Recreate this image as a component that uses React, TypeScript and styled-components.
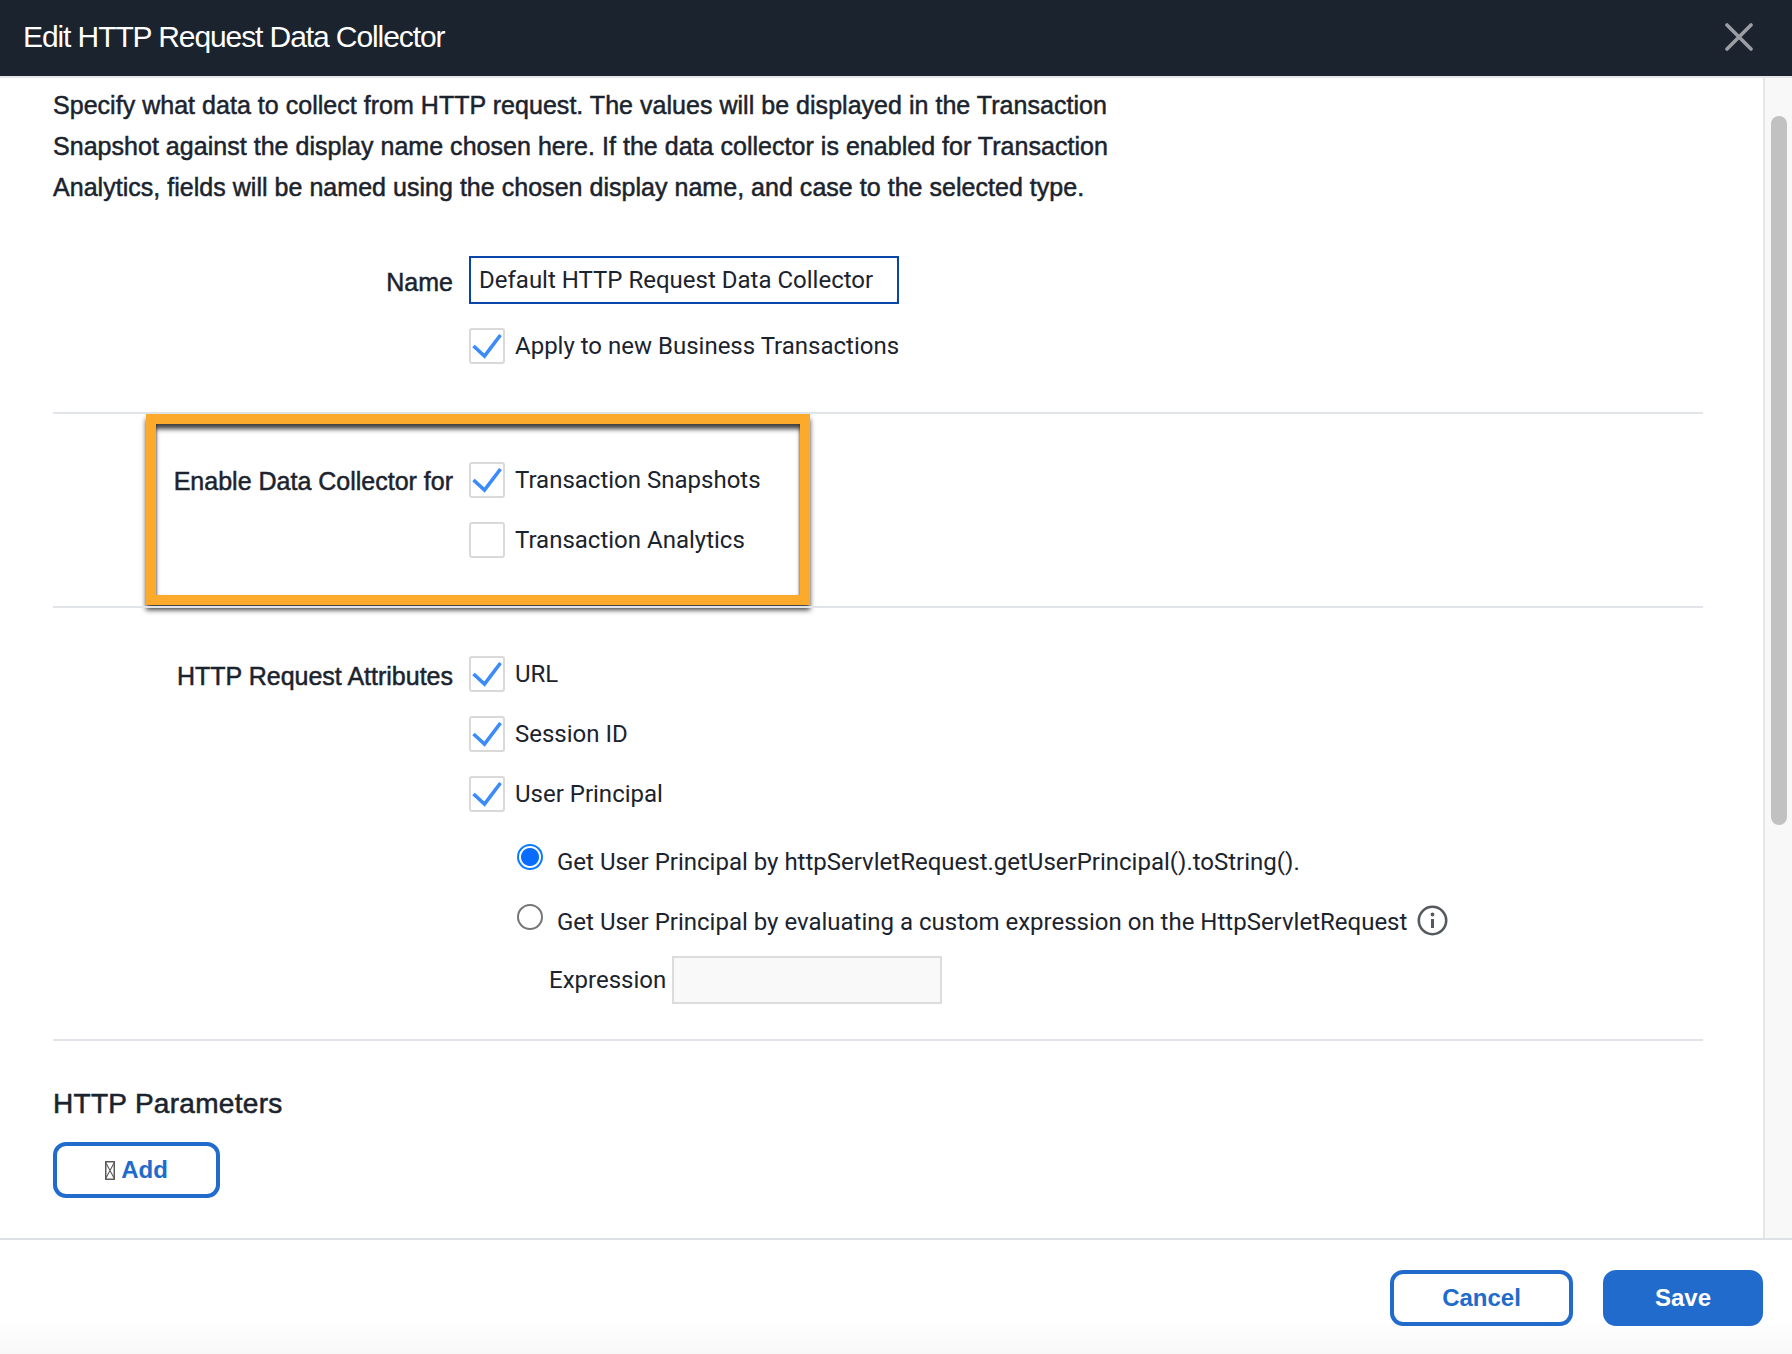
import React from "react";
import styled, { createGlobalStyle } from "styled-components";

const Global = createGlobalStyle`
  html, body { margin: 0; padding: 0; background: #fff; }
  * { box-sizing: border-box; }
`;

const Page = styled.div`
  width: 1792px;
  height: 1354px;
  display: flex;
  flex-direction: column;
  overflow: hidden;
  background: #fff;
  color: #1b232e;
  font-family: "Liberation Sans", Arial, sans-serif;
`;

const Header = styled.header`
  flex: 0 0 78px;
  background: #1b232e;
  border-bottom: 2px solid #e6e6e6;
  display: flex;
  align-items: center;
  justify-content: space-between;
  padding: 0 39px 2px 23px;
`;

const Title = styled.h1`
  margin: 0;
  font-size: 30px;
  font-weight: 400;
  letter-spacing: -1.09px;
  color: #fff;
`;

const CloseIcon = styled.svg`
  width: 28px;
  height: 28px;
  display: block;
`;

const Body = styled.div`
  flex: 1;
  min-height: 0;
  display: flex;
`;

const Content = styled.main`
  flex: 1;
  min-width: 0;
  padding: 7px 60px 0 53px;
  overflow: hidden;
`;

const Scrollbar = styled.div`
  flex: 0 0 29px;
  background: #f8f8f8;
  border-left: 2px solid #e6e6e6;
  padding: 38px 5px 0 6px;
`;

const Thumb = styled.div`
  width: 16px;
  height: 709px;
  border-radius: 8px;
  background: #c1c1c1;
`;

const Intro = styled.p`
  margin: 0;
  font-size: 25px;
  line-height: 41px;
  letter-spacing: 0.03px;
  -webkit-text-stroke: 0.5px #1b232e;
  white-space: nowrap;
`;

const Section = styled.section<{ $top: number; $bottom: number }>`
  position: relative;
  padding: ${(p) => p.$top}px 0 ${(p) => p.$bottom}px;
`;

const Divided = styled(Section)`
  border-top: 2px solid #e1e4e8;
`;

const FormRow = styled.div<{ $gap?: number }>`
  display: grid;
  grid-template-columns: 400px 1fr;
  column-gap: 16px;
  margin-bottom: ${(p) => p.$gap ?? 0}px;
`;

const RowLabel = styled.label<{ $offset: number }>`
  text-align: right;
  font-size: 25px;
  line-height: 36px;
  padding-top: ${(p) => p.$offset}px;
  -webkit-text-stroke: 0.5px #1b232e;
  white-space: nowrap;
`;

const Stack = styled.div`
  display: flex;
  flex-direction: column;
  gap: 24px;
`;

const TextInput = styled.input`
  display: block;
  width: 430px;
  height: 48px;
  border: 2px solid #0a46a8;
  padding: 0 8px;
  margin: 0;
  outline: none;
  background: #fff;
  color: #1b232e;
  font: 400 24px Roboto, sans-serif;
`;

const CheckRow = styled.div`
  display: flex;
  align-items: center;
  gap: 10px;
  height: 36px;
`;

const Box = styled.span`
  flex: 0 0 36px;
  width: 36px;
  height: 36px;
  border: 2px solid #d9d9d9;
  border-radius: 3px;
  background: #fff;
  position: relative;
`;

const Tick = styled.svg`
  position: absolute;
  left: -2px;
  top: -2px;
  width: 36px;
  height: 36px;
`;

const OptionText = styled.span`
  font: 400 24px Roboto, sans-serif;
  white-space: nowrap;
`;

const RadioGroup = styled.div`
  display: flex;
  flex-direction: column;
  gap: 24px;
  margin: 32px 0 0 48px;
`;

const RadioRow = styled.div`
  display: flex;
  align-items: flex-start;
  gap: 14px;
  height: 36px;
`;

const RadioDot = styled.span<{ $on?: boolean }>`
  flex: 0 0 26px;
  width: 26px;
  height: 26px;
  border-radius: 50%;
  border: 2px solid ${(p) => (p.$on ? "#0a7cff" : "#767676")};
  background: ${(p) => (p.$on ? "radial-gradient(circle, #0a6cff 0 8.5px, #fff 9.5px)" : "#fff")};
`;

const RadioText = styled(OptionText)`
  line-height: 36px;
`;

const InfoIcon = styled.svg`
  width: 31px;
  height: 31px;
  margin: 1px 0 0 -4px;
  flex: 0 0 31px;
`;

const ExpressionRow = styled.div`
  display: flex;
  align-items: center;
  gap: 6px;
  margin: 16px 0 0 80px;
`;

const ExpressionInput = styled.input`
  display: block;
  width: 270px;
  height: 48px;
  border: 2px solid #dcdcdc;
  background: #f9f9f9;
  padding: 0;
  margin: 0;
  outline: none;
`;

const Highlight = styled.div`
  position: absolute;
  left: 93px;
  top: 0;
  width: 664px;
  height: 191px;
  border: 10px solid #fcaa2c;
  box-shadow: 0 5px 5px rgba(30, 30, 30, 0.85), inset 0 6px 5px -1px rgba(30, 30, 30, 0.85),
    inset 2px 0 2px -1px rgba(40, 40, 40, 0.35), inset -2px 0 2px -1px rgba(40, 40, 40, 0.35);
  pointer-events: none;
`;

const Heading = styled.h2`
  margin: 0;
  font-size: 28px;
  font-weight: 400;
  line-height: 32px;
  letter-spacing: 0.3px;
  -webkit-text-stroke: 0.55px #1b232e;
`;

const Button = styled.button<{ $w: number; $solid?: boolean }>`
  width: ${(p) => p.$w}px;
  height: 56px;
  border: 4px solid #206bcc;
  border-radius: 13px;
  background: ${(p) => (p.$solid ? "#206bcc" : "#fff")};
  color: ${(p) => (p.$solid ? "#fff" : "#206bcc")};
  font: 700 24px "Liberation Sans", Arial, sans-serif;
  padding: 0;
  display: inline-flex;
  align-items: center;
  justify-content: center;
  gap: 6px;
`;

const AddButton = styled(Button)`
  margin-top: 22px;
  display: flex;
`;

const Tofu = styled.svg`
  width: 10px;
  height: 19px;
  flex: 0 0 10px;
`;

const Footer = styled.footer`
  flex: 0 0 116px;
  border-top: 2px solid #dde1e5;
  background: linear-gradient(#fff 0 70%, #f8f8f8 100%);
  display: flex;
  justify-content: flex-end;
  align-items: flex-start;
  gap: 30px;
  padding: 30px 29px 0 0;
`;

const Check = ({ on = true }: { on?: boolean }) => (
  <Box>
    {on && (
      <Tick viewBox="0 0 36 36">
        <path d="M4.5 18 L15.5 28 L31.5 7" fill="none" stroke="#3b8bfb" strokeWidth="3.6" />
      </Tick>
    )}
  </Box>
);

const Option = ({ text, on }: { text: string; on?: boolean }) => (
  <CheckRow>
    <Check on={on} />
    <OptionText>{text}</OptionText>
  </CheckRow>
);

export default function App() {
  return (
    <Page>
      <Global />
      <Header>
        <Title>Edit HTTP Request Data Collector</Title>
        <CloseIcon viewBox="0 0 28 28">
          <path d="M2 2 L26 26 M26 2 L2 26" stroke="#9b9ea2" strokeWidth="3.6" strokeLinecap="round" />
        </CloseIcon>
      </Header>
      <Body>
        <Content>
          <Intro>
            Specify what data to collect from HTTP request. The values will be displayed in the Transaction
            <br />
            Snapshot against the display name chosen here. If the data collector is enabled for Transaction
            <br />
            Analytics, fields will be named using the chosen display name, and case to the selected type.
          </Intro>
          <Section $top={48} $bottom={48}>
            <FormRow $gap={24}>
              <RowLabel $offset={8}>Name</RowLabel>
              <TextInput readOnly value="Default HTTP Request Data Collector" />
            </FormRow>
            <FormRow>
              <span />
              <Option text="Apply to new Business Transactions" />
            </FormRow>
          </Section>
          <Divided $top={48} $bottom={48}>
            <Highlight />
            <FormRow>
              <RowLabel $offset={1}>Enable Data Collector for</RowLabel>
              <Stack>
                <Option text="Transaction Snapshots" />
                <Option text="Transaction Analytics" on={false} />
              </Stack>
            </FormRow>
          </Divided>
          <Divided $top={48} $bottom={35}>
            <FormRow>
              <RowLabel $offset={2}>HTTP Request Attributes</RowLabel>
              <div>
                <Stack>
                  <Option text="URL" />
                  <Option text="Session ID" />
                  <Option text="User Principal" />
                </Stack>
                <RadioGroup>
                  <RadioRow>
                    <RadioDot $on />
                    <RadioText>Get User Principal by httpServletRequest.getUserPrincipal().toString().</RadioText>
                  </RadioRow>
                  <RadioRow>
                    <RadioDot />
                    <RadioText>Get User Principal by evaluating a custom expression on the HttpServletRequest</RadioText>
                    <InfoIcon viewBox="0 0 31 31">
                      <circle cx="15.5" cy="15.5" r="13.7" fill="none" stroke="#555a60" strokeWidth="2.6" />
                      <circle cx="15.5" cy="9.5" r="1.9" fill="#555a60" />
                      <path d="M15.5 14 V23" stroke="#555a60" strokeWidth="3" />
                    </InfoIcon>
                  </RadioRow>
                </RadioGroup>
                <ExpressionRow>
                  <OptionText>Expression</OptionText>
                  <ExpressionInput readOnly />
                </ExpressionRow>
              </div>
            </FormRow>
          </Divided>
          <Divided $top={47} $bottom={0}>
            <Heading>HTTP Parameters</Heading>
            <AddButton $w={167}>
              <Tofu viewBox="0 0 10 19">
                <rect x="0.75" y="0.75" width="8.5" height="17.5" fill="none" stroke="#5a5a5a" strokeWidth="1.5" />
                <path d="M1 2 L9 17 M9 2 L1 17" stroke="#5a5a5a" strokeWidth="1.1" />
              </Tofu>
              Add
            </AddButton>
          </Divided>
        </Content>
        <Scrollbar>
          <Thumb />
        </Scrollbar>
      </Body>
      <Footer>
        <Button $w={183}>Cancel</Button>
        <Button $w={160} $solid>Save</Button>
      </Footer>
    </Page>
  );
}
